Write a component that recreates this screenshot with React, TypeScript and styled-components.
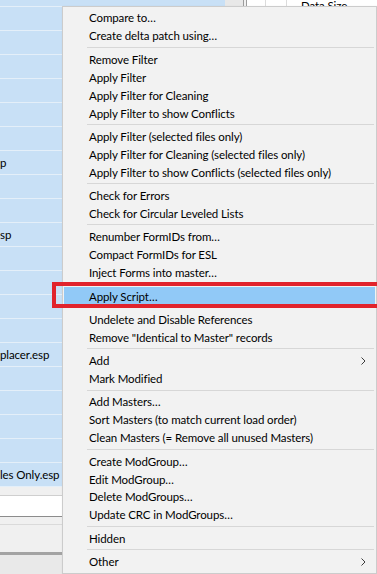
import styled, { createGlobalStyle } from "styled-components";

const GlobalStyle = createGlobalStyle`
  html, body {
    margin: 0;
    padding: 0;
    overflow: hidden;
    background: #f0f0f0;
  }
  body {
    font-family: Lato, "Noto Sans", sans-serif;
    font-size: 11.5px;
    letter-spacing: -0.1px;
    color: #000;
  }
`;

type MenuEntry =
    | { kind: "item"; label: string; submenu?: boolean; active?: boolean }
    | { kind: "sep" };

const item = (label: string, extra: { submenu?: boolean; active?: boolean } = {}): MenuEntry => ({
    kind: "item",
    label,
    ...extra,
});
const sep: MenuEntry = { kind: "sep" };

const menuEntries: MenuEntry[] = [
    item("Compare to…"),
    item("Create delta patch using…"),
    sep,
    item("Remove Filter"),
    item("Apply Filter"),
    item("Apply Filter for Cleaning"),
    item("Apply Filter to show Conflicts"),
    sep,
    item("Apply Filter (selected files only)"),
    item("Apply Filter for Cleaning (selected files only)"),
    item("Apply Filter to show Conflicts (selected files only)"),
    sep,
    item("Check for Errors"),
    item("Check for Circular Leveled Lists"),
    sep,
    item("Renumber FormIDs from…"),
    item("Compact FormIDs for ESL"),
    item("Inject Forms into master…"),
    sep,
    item("Apply Script…", { active: true }),
    sep,
    item("Undelete and Disable References"),
    item('Remove "Identical to Master" records'),
    sep,
    item("Add", { submenu: true }),
    item("Mark Modified"),
    sep,
    item("Add Masters…"),
    item("Sort Masters (to match current load order)"),
    item("Clean Masters (= Remove all unused Masters)"),
    sep,
    item("Create ModGroup…"),
    item("Edit ModGroup…"),
    item("Delete ModGroups…"),
    item("Update CRC in ModGroups…"),
    sep,
    item("Hidden"),
    sep,
    item("Other", { submenu: true }),
];

// visible tail of each plugin name, the rest is scrolled off to the left
const rowNames: Record<number, string> = {
    7: "p",
    10: "sp",
    15: "placer.esp",
    20: "les Only.esp",
};
const focusedRow = 8;
const rowCount = 21;

function App() {
    return (
        <>
            <GlobalStyle />
            <Screen>
                <Workspace>
                    <ListPane>
                        <Rows>
                            {Array.from({ length: rowCount }, (_, i) => (
                                <Row key={i} $focused={i === focusedRow}>
                                    {rowNames[i] ?? ""}
                                </Row>
                            ))}
                        </Rows>
                        <ScrollStrip />
                    </ListPane>
                    <Splitter />
                    <DetailPane>
                        <HeaderRow>
                            <HeaderCell $width={18} />
                            <HeaderCell $width={20} />
                            <HeaderLabel>Data Size</HeaderLabel>
                        </HeaderRow>
                    </DetailPane>
                </Workspace>
                <BottomArea>
                    <Gap />
                    <InputBox />
                    <Gap $line />
                    <StatusPanel />
                    <Divider />
                    <Footer />
                </BottomArea>

                <ContextMenu>
                    {menuEntries.map((entry, i) =>
                        entry.kind === "sep" ? (
                            <Separator key={i} />
                        ) : (
                            <MenuItem key={i} $active={!!entry.active}>
                                <span>{entry.label}</span>
                                {entry.submenu && (
                                    <Chevron width="5" height="8" viewBox="0 0 5 8">
                                        <polyline
                                            points="0.5,0.5 4,4 0.5,7.5"
                                            fill="none"
                                            stroke="#3c3c3c"
                                            strokeWidth="1"
                                        />
                                    </Chevron>
                                )}
                            </MenuItem>
                        )
                    )}
                </ContextMenu>
                <RedFrame />
            </Screen>
        </>
    );
}

const Screen = styled.div`
    position: relative;
    width: 377px;
    height: 574px;
    overflow: hidden;
    display: flex;
    flex-direction: column;
    background: #f0f0f0;
`;

const Workspace = styled.div`
    display: flex;
    height: 488px;
    overflow: hidden;
`;

const ListPane = styled.div`
    display: flex;
    width: 243px;
    flex-shrink: 0;
`;

const Rows = styled.div`
    display: flex;
    flex-direction: column;
    width: 225px;
    margin-top: -17px;
`;

const Row = styled.div<{ $focused: boolean }>`
    position: relative;
    height: 23px;
    line-height: 23px;
    border-bottom: 1px solid #e4eff9;
    background: #c8e0f6;
    white-space: nowrap;
    overflow: hidden;
    padding-left: 0;

    ${(p) =>
        p.$focused &&
        `
        &::after {
            content: "";
            position: absolute;
            left: 0;
            right: 0;
            top: -1px;
            bottom: -1px;
            border-top: 1px dotted #9aa6b2;
            border-bottom: 1px dotted #3a3a3a;
        }
    `}
`;

const ScrollStrip = styled.div`
    flex: 1;
    background: #e8e8e8;
`;

const Splitter = styled.div`
    width: 2px;
    flex-shrink: 0;
    border-left: 1px solid #9c9c9c;
    border-right: 1px solid #9c9c9c;
    background: #f0f0f0;
`;

const DetailPane = styled.div`
    flex: 1;
    background: #fff;
`;

const HeaderRow = styled.div`
    display: flex;
    height: 24px;
    margin-top: -6px;
    border-bottom: 1px solid #e5e5e5;
`;

const HeaderCell = styled.div<{ $width: number }>`
    width: ${(p) => p.$width}px;
    flex-shrink: 0;
    border-right: 1px solid #dcdcdc;
`;

const HeaderLabel = styled.div`
    padding-left: 14px;
    line-height: 24px;
    white-space: nowrap;
`;

const BottomArea = styled.div`
    display: flex;
    flex-direction: column;
    flex: 1;
`;

const Gap = styled.div<{ $line?: boolean }>`
    height: 7px;
    background: #f0f0f0;
    border-bottom: ${(p) => (p.$line ? "1px solid #dadada" : "none")};
`;

const InputBox = styled.div`
    height: 20px;
    background: #fff;
    border-top: 1px solid #cfcfcf;
    border-bottom: 1px solid #8c8c8c;
`;

const StatusPanel = styled.div`
    height: 27px;
    background: #f0f0f0;
`;

const Divider = styled.div`
    height: 3px;
    background: #a3a3a3;
`;

const Footer = styled.div`
    flex: 1;
    background: #e9e9e9;
`;

const ContextMenu = styled.div`
    position: absolute;
    left: 62px;
    top: 6px;
    width: 315px;
    box-sizing: border-box;
    padding: 2px 1px;
    background: #f2f2f2;
    border: 1px solid #cccccc;
    box-shadow: 1px 1px 2px rgba(0, 0, 0, 0.2);
    display: flex;
    flex-direction: column;
`;

const MenuItem = styled.div<{ $active: boolean }>`
    display: flex;
    align-items: center;
    justify-content: space-between;
    height: 17.95px;
    padding: 0 9px 0 25px;
    white-space: nowrap;
    background: ${(p) => (p.$active ? "#91c9f7" : "transparent")};
`;

const Chevron = styled.svg`
    display: block;
`;

const Separator = styled.div`
    height: 1px;
    margin: 2px 1px 2.4px 23px;
    background: #d7d7d7;
`;

const RedFrame = styled.div`
    position: absolute;
    left: 52px;
    top: 282px;
    width: 340px;
    height: 26px;
    box-sizing: border-box;
    border: 4px solid #e1232c;
`;

export default App;
